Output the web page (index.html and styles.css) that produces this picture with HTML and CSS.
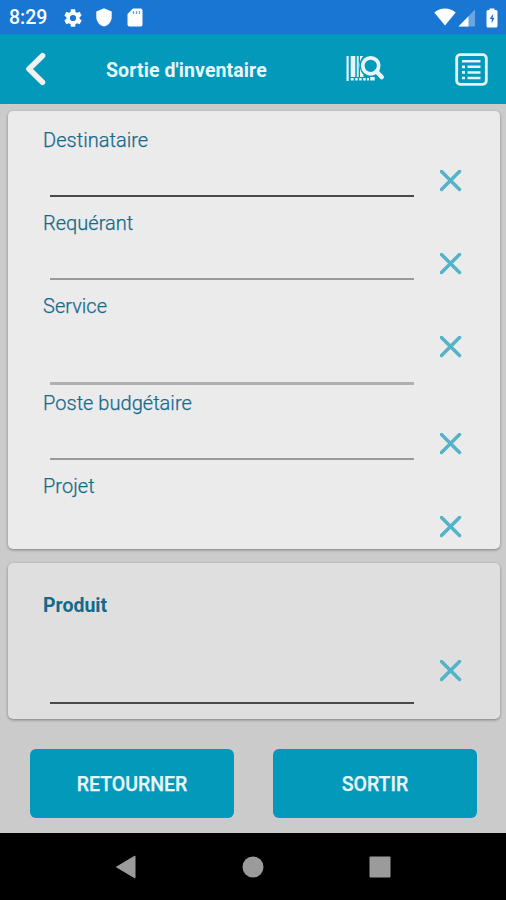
FILE: index.html
```html
<!DOCTYPE html>
<html lang="fr">
<head>
<meta charset="utf-8">
<title>Sortie d'inventaire</title>
<link rel="stylesheet" href="styles.css">
</head>
<body>
<svg class="defs" width="0" height="0"><symbol id="clear" viewBox="0 0 22 22"><path d="M1.500 1.500 19.500 19.500M19.500 1.500 1.500 19.500" fill="none" stroke="#54b3c8" stroke-width="3.500" stroke-linecap="round"/></symbol></svg>
<div class="screen">
  <div class="status">
    <span class="clock">8:29</span>
    <svg class="gear" width="22" height="22" viewBox="0 0 24 24"><path fill="#fff" d="M19.14 12.94c.04-.3.06-.61.06-.94s-.02-.64-.07-.94l2.03-1.58a.49.49 0 0 0 .12-.61l-1.92-3.32a.49.49 0 0 0-.59-.22l-2.39.96a7 7 0 0 0-1.62-.94l-.36-2.54A.48.48 0 0 0 13.92 2.4h-3.84a.48.48 0 0 0-.47.41l-.36 2.54a7.3 7.3 0 0 0-1.62.94l-2.39-.96a.48.48 0 0 0-.59.22L2.74 8.87a.48.48 0 0 0 .12.61l2.03 1.58a6 6 0 0 0 0 1.88l-2.03 1.58a.49.49 0 0 0-.12.61l1.92 3.32c.12.22.37.29.59.22l2.39-.96c.5.38 1.03.7 1.62.94l.36 2.54c.05.24.24.41.48.41h3.84c.24 0 .44-.17.47-.41l.36-2.54a7.3 7.3 0 0 0 1.62-.94l2.39.96c.22.08.47 0 .59-.22l1.92-3.32a.48.48 0 0 0-.12-.61zM12 15.4a3.4 3.4 0 1 1 0-6.8 3.4 3.4 0 0 1 0 6.8z"/></svg>
    <svg class="shield" width="16" height="19" viewBox="0 0 16 19"><path fill="#fff" d="M8 .3 15.7 3.6V8.700c0 4.600-3 8.600-7.700 9.900C3.300 17.300.3 13.300.3 8.700V3.600z"/></svg>
    <svg class="sd" width="16" height="19" viewBox="0 0 16 19"><path fill="#fff" d="M6 .5h7.500A2 2 0 0 1 15.500 2.500v14a2 2 0 0 1-2 2h-11a2 2 0 0 1-2-2V6z"/><path d="M6.500 3v3M9.500 3v3M12.500 3v3" stroke="#1976d2" stroke-width="1.300" opacity=".65"/></svg>
    <svg class="wifi" width="22" height="18" viewBox="0 0 22 18"><path fill="#fff" d="M11 17.500.3 4.400C6.400-.7 15.600-.7 21.700 4.400z"/></svg>
    <svg class="signal" width="18" height="18" viewBox="0 0 18 18"><path fill="#fff" opacity=".35" d="M.5 17.500 17 .5v17z"/><path fill="#fff" d="M.5 17.500 10.500 7.200v10.300z"/></svg>
    <svg class="battery" width="12" height="20" viewBox="0 0 12 20"><path fill="#fff" d="M3.500 2V.5h5V2H10a1.500 1.500 0 0 1 1.500 1.500V18a1.500 1.500 0 0 1-1.500 1.500H2A1.500 1.500 0 0 1 .5 18V3.500A1.500 1.500 0 0 1 2 2z"/><path fill="#1976d2" d="M7.300 5.500 3.700 11h2v4.500L8.500 9.800H6.600z"/></svg>
  </div>
  <header class="appbar">
    <svg class="back" width="22" height="34" viewBox="0 0 22 34"><path d="M18.500 3.800 5 17 18.500 30.200" fill="none" stroke="#f1f1f1" stroke-width="5.600" stroke-linecap="round" stroke-linejoin="round"/></svg>
    <h1 class="title">Sortie d'inventaire</h1>
    <svg class="scan" width="40" height="28" viewBox="0 0 40 28"><g fill="#e4f4f8"><path d="M.5 1h2.200v25H.5zM4.700 1h4.600v21H4.700zM10.800 1h1.900v21h-1.900zM14 1h3.200C13.500 5.500 12.800 10 14.500 15c.7 2 1.900 3.500 3 4.500V22H14zM4.700 23h3v2.500h-3zM9.200 23h2.500v2.500H9.200zM13.200 23h2.500v2.500h-2.500zM17.200 23h2.500v2.500h-2.500zM21 23h2v2.500h-2zM24.200 22h4.500v3.500h-4.500z"/></g><circle cx="24.700" cy="10.800" r="8" fill="none" stroke="#e9f7fa" stroke-width="3.700"/><path d="M30.500 16.500 35.700 22" stroke="#e9f7fa" stroke-width="4.500" stroke-linecap="round"/></svg>
    <svg class="list" width="33" height="33" viewBox="0 0 33 33"><rect x="1.700" y="1.700" width="29.600" height="29.600" rx="3.500" fill="none" stroke="#e4f4f8" stroke-width="2.800"/><path d="M7 8.200h18.500M12.500 13.800h13M12.500 19.400h13M12.500 25h13" stroke="#e4f4f8" stroke-width="2.500"/><path d="M7 13.800h3M7 19.400h3M7 25h3" stroke="#e4f4f8" stroke-width="2.700"/></svg>
  </header>
  <main class="content">
    <section class="card form">
      <div class="field dark"><label>Destinataire</label><div class="input"></div><svg class="x"><use href="#clear"/></svg></div>
      <div class="field"><label>Requérant</label><div class="input"></div><svg class="x"><use href="#clear"/></svg></div>
      <div class="field tall"><label>Service</label><div class="input"></div><svg class="x"><use href="#clear"/></svg></div>
      <div class="field"><label>Poste budgétaire</label><div class="input"></div><svg class="x"><use href="#clear"/></svg></div>
      <div class="field last"><label>Projet</label><div class="input"></div><svg class="x"><use href="#clear"/></svg></div>
    </section>
    <section class="card product">
      <div class="field dark"><label>Produit</label><div class="input"></div><svg class="x"><use href="#clear"/></svg></div>
    </section>
    <div class="actions"><button>RETOURNER</button><button>SORTIR</button></div>
  </main>
  <nav class="nav">
    <svg width="22" height="26" viewBox="0 0 22 26"><path d="M1.500 13 20 2v22z" fill="#9b9b9b" stroke="#9b9b9b" stroke-linejoin="round"/></svg>
    <svg width="22" height="22" viewBox="0 0 22 22"><circle cx="11" cy="11" r="10.500" fill="#9b9b9b"/></svg>
    <svg width="22" height="22" viewBox="0 0 22 22"><rect x=".5" y=".5" width="21" height="21" rx="1" fill="#9b9b9b"/></svg>
  </nav>
</div>
</body>
</html>
```
FILE: styles.css
```css
* { box-sizing: border-box; }
body { margin: 0; font-family: Roboto, sans-serif; }
.defs { display: none; }
svg { display: block; flex: none; }
.screen { width: 506px; height: 900px; display: flex; flex-direction: column; overflow: hidden; background: #cbcbcb; }

.status { height: 34px; flex: none; display: flex; align-items: center; background: #1976d2; color: #fff; padding: 1px 8px 0 9px; }
.clock { width: 53px; padding-top: 1px; font-size: 19.500px; font-weight: 500; line-height: 24px; }
.shield { margin-left: 12px; }
.sd { margin-left: 15px; }
.wifi { margin-left: auto; margin-top: -2px; }
.signal { margin-left: 2px; }
.battery { margin-left: 10px; }

.appbar { height: 70px; flex: none; display: flex; align-items: center; background: #0299bb; padding: 0 18px 0 24px; }
.title { margin: 0 0 0 60px; padding-top: 3px; width: 162px; font-size: 19.500px; letter-spacing: .1px; font-weight: 700; line-height: 24px; color: #e9f7fa; white-space: nowrap; }
.scan { margin-left: 78px; }
.list { margin-left: auto; }

.content { flex: 1; padding: 7px 6px 0 8px; }
.card { border-radius: 5px; box-shadow: 0 1px 3px rgba(0, 0, 0, .38); overflow: hidden; }
.form { height: 438px; padding: 15px 0 0 35px; background: #ebebeb; }
.product { height: 156px; margin-top: 14px; padding: 28px 0 0 35px; background: #dfdfdf; }
.field { height: 83px; display: grid; grid-template: 28px 1fr / 371px 22px; column-gap: 26px; align-items: start; }
.field label { grid-column: 1 / 3; font-size: 20px; line-height: 28px; font-weight: 300; color: #15698a; letter-spacing: .03px; -webkit-text-stroke: .25px #15698a; }
.input { height: 43px; margin-left: 7px; border-bottom: 2px solid #999; }
.dark .input { border-bottom-color: #4a4a4a; }
.x { width: 22px; height: 22px; margin-top: 16px; }
.tall { height: 97px; }
.tall .input { height: 65px; border-bottom: 3px solid #b0b0b0; }
.last .input { border: 0; }
.product .field label { padding-top: 1px; font-size: 19.500px; font-weight: 700; letter-spacing: 0; -webkit-text-stroke: 0; }
.product .field { height: 128px; }
.product .input { height: 85px; }
.product .x { margin-top: 41px; }

.actions { display: flex; gap: 39px; padding: 30px 0 0 22px; }
.actions button { width: 204px; height: 69px; padding: 2px 0 0; border: 0; border-radius: 6px; background: #0299bb; color: #e9f7fa; font: 500 19.500px/24px Roboto, sans-serif; -webkit-text-stroke: .25px #e9f7fa; }

.nav { height: 67px; flex: none; display: flex; justify-content: center; align-items: center; gap: 105px; background: #000; }
```
